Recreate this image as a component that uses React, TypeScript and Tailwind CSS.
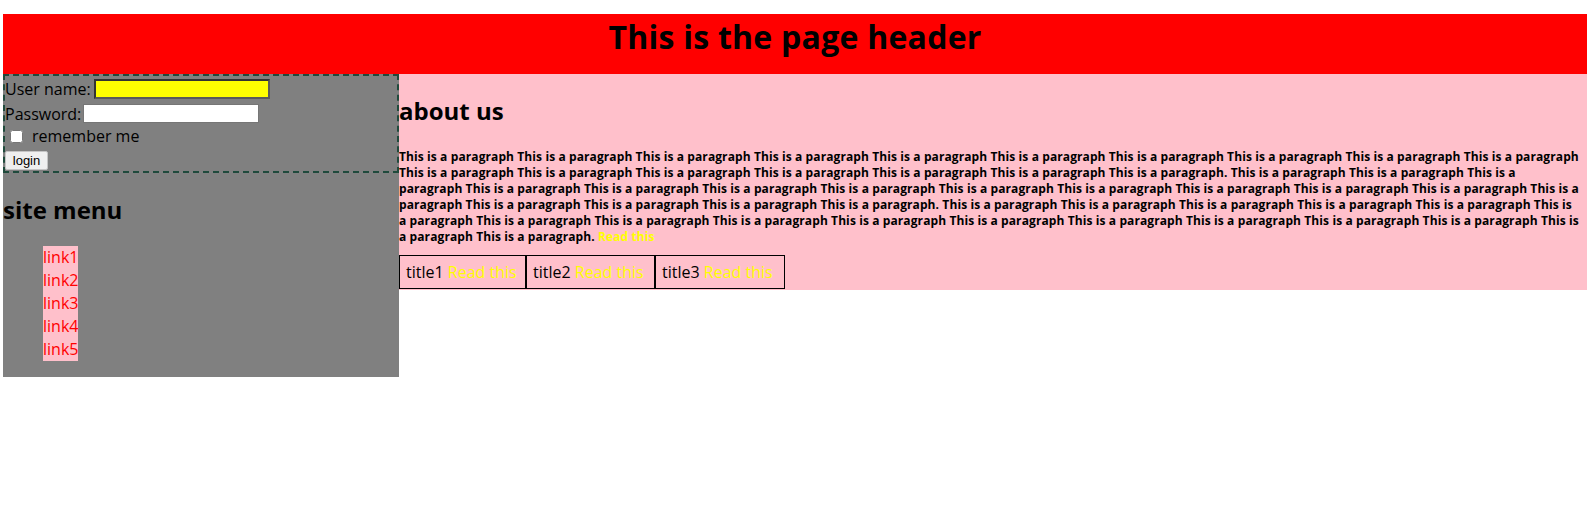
import React from "react";

const R = "This is a paragraph";
const reps = (n: number) => Array.from({ length: n }, () => R).join(" ");

const lines: string[] = [
  reps(10),
  reps(6) + " This is a paragraph. " + reps(2) + " This is a",
  "paragraph " + reps(9) + " This is a",
  "paragraph " + reps(3) + " This is a paragraph. " + reps(5) + " This is",
  "a paragraph " + reps(9) + " This is",
];

const cells = [
  { t: "title1", cls: "w-[127px]" },
  { t: "title2", cls: "w-[129px]" },
  { t: "title3", cls: "w-[130px]" },
];

export default function App() {
  return (
    <div className="pt-[14px] pl-[3px] font-['Comic_Sans_MS','Open_Sans',sans-serif] text-black">
      <div className="w-[1584px]">
        <header className="h-[60px] bg-[#ff0000] pt-[5px] text-center">
          <h1 className="text-[32px] font-bold tracking-[0.25px] leading-[36px]">This is the page header</h1>
        </header>
        <div className="flex items-start">
          <aside className="w-[396px] bg-[#808080]">
            <form className="border-2 border-dashed border-[#1f4a3c] h-[99px] flex flex-col text-[16px]">
              <div className="h-[25px] flex items-center">
                <span>User name:</span>
                <input
                  type="text"
                  className="ml-[3px] w-[176px] h-[20px] bg-[#ffff00] border-2 border-t-[#333333] border-l-[#333333] border-r-[#5a5a5a] border-b-[#5a5a5a] outline-none"
                />
              </div>
              <div className="h-[25px] flex items-center">
                <span>Password:</span>
                <input
                  type="password"
                  className="ml-[2px] w-[176px] h-[19px] bg-white border border-[#767676] outline-none"
                />
              </div>
              <div className="h-[20px] flex items-center">
                <input type="checkbox" className="ml-[5px] mr-[9px] w-[13px] h-[13px]" />
                <span>remember me</span>
              </div>
              <div className="h-[25px] flex items-start">
                <button
                  type="button"
                  className="mt-[5px] ml-0 h-[19px] w-[43px] bg-[#efefef] border border-[#c4c4c4] rounded-[2px] font-['Liberation_Sans',Arial,sans-serif] text-[13px] leading-none text-black"
                >
                  login
                </button>
              </div>
            </form>
            <h2 className="mt-[23px] text-[24px] leading-[28px] font-bold">site menu</h2>
            <ul className="mt-[22px] pl-[40px] pb-[16px] text-[16px]">
              {["link1", "link2", "link3", "link4", "link5"].map((l) => (
                <li key={l} className="leading-[23px] h-[23px]">
                  <a href="#" className="inline-block align-top leading-[23px] bg-[#ffc0cb] text-[#ff0000]">
                    {l}
                  </a>
                </li>
              ))}
            </ul>
          </aside>
          <main className="w-[1188px] bg-[#ffc0cb] pb-[1px]">
            <h2 className="mt-[23px] text-[24px] leading-[28px] font-bold">about us</h2>
            <p className="mt-[24px] mb-[10px] text-[12px] leading-[16px] font-bold tracking-[0.1px]">
              {lines.map((t, i) => (
                <span key={i} className="block whitespace-nowrap">
                  {t}
                </span>
              ))}
              <span className="block whitespace-nowrap">
                a paragraph This is a paragraph. <a href="#" className="text-[#ffff00]">Read this</a>
              </span>
            </p>
            <table className="border-separate border-spacing-0 text-[16px]">
              <tbody>
                <tr>
                  {cells.map((c) => (
                    <td key={c.t} className={`border border-black h-[34px] px-[6px] align-middle whitespace-nowrap ${c.cls}`}>
                      {c.t} <a href="#" className="text-[#ffff00]">Read this</a>
                    </td>
                  ))}
                </tr>
              </tbody>
            </table>
          </main>
        </div>
      </div>
    </div>
  );
}
